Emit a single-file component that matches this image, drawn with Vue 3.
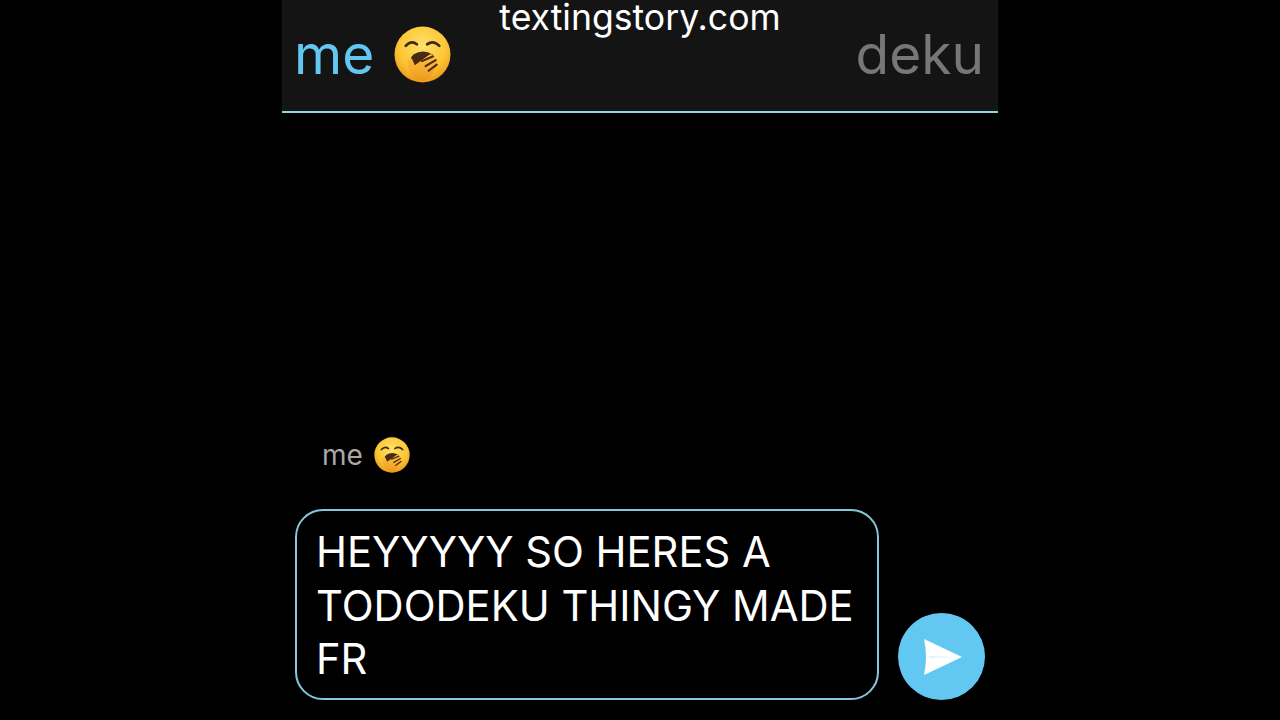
<template>
  <div class="page">
    <main class="phone">
      <header class="top-bar">
        <div class="who">
          <span class="me">me</span>
          <svg class="yawn big" viewBox="0 0 56 56"><use href="#yawn-face" /></svg>
        </div>
        <span class="other">deku</span>
        <span class="watermark">textingstory.com</span>
      </header>

      <section class="composer">
        <div class="sender">
          <span>me</span>
          <svg class="yawn small" viewBox="0 0 56 56">
            <defs>
              <radialGradient id="face-fill" cx="50%" cy="35%" r="65%">
                <stop offset="0" stop-color="#ffe169" />
                <stop offset="0.65" stop-color="#fcc636" />
                <stop offset="1" stop-color="#ec9a1c" />
              </radialGradient>
              <linearGradient id="hand-fill" x1="0" y1="0" x2="0" y2="1">
                <stop offset="0" stop-color="#fdc53c" />
                <stop offset="1" stop-color="#ee981e" />
              </linearGradient>
              <g id="yawn-face">
                <circle cx="28" cy="28" r="27.5" fill="url(#face-fill)" />
                <path d="M11.5 19.5 Q17 13.5 22.5 18" fill="none" stroke="#3f2a14" stroke-width="2.6" stroke-linecap="round" />
                <path d="M32.5 18 Q38.5 13.5 44.5 19.5" fill="none" stroke="#3f2a14" stroke-width="2.6" stroke-linecap="round" />
                <ellipse cx="28.5" cy="34" rx="12.5" ry="9" fill="#4a2a12" />
                <path d="M13 34 Q14.5 30 17.5 32 L20.5 38.5 L35 28 Q38 27 38.5 30 Q41.5 30 41.5 33 Q43.5 34.5 42.5 37 Q43.5 39.5 41.5 41 Q37 49 30 54 Q22 56 18 49 Q13 41 13 34 Z" fill="url(#hand-fill)" />
                <path d="M27.5 34.5 L38 30 M31 39.5 L41 33.5 M34 44 L42 38" fill="none" stroke="#4a2a12" stroke-width="2" stroke-linecap="round" />
              </g>
            </defs>
            <use href="#yawn-face" />
          </svg>
        </div>
        <div class="input-row">
          <div class="bubble">HEYYYYY SO HERES A TODODEKU THINGY MADE FR</div>
          <button class="send" aria-label="send">
            <svg viewBox="0 0 40 40" width="40" height="40">
              <path d="M1 2 Q5 20 1 38 L39 20 Z" fill="#fff" />
              <path d="M6 19.2 L38 20 L6 20.8 Z" fill="#d3effa" />
            </svg>
          </button>
        </div>
      </section>
    </main>
  </div>
</template>

<script setup>
</script>

<style>
html, body {
  background: #000;
}
</style>

<style scoped>
.page {
  display: flex;
  justify-content: center;
  height: 720px;
  overflow: hidden;
  background: #000;
  font-family: Inter, "Liberation Sans", sans-serif;
}

.phone {
  display: flex;
  flex-direction: column;
  justify-content: space-between;
  width: 716px;
}

.top-bar {
  position: relative;
  box-sizing: border-box;
  display: flex;
  align-items: center;
  justify-content: space-between;
  height: 113px;
  padding: 0 14px 2px 12px;
  background: #141414;
  border-bottom: 2px solid #8fd3ec;
}

.who {
  display: flex;
  align-items: center;
  gap: 20px;
}

.me {
  color: #62c8f2;
  font-size: 55px;
  line-height: 1;
}

.other {
  color: #777;
  font-size: 55px;
  line-height: 1;
}

.watermark {
  position: absolute;
  top: 0;
  left: 0;
  right: 0;
  text-align: center;
  color: #fff;
  font-size: 35.6px;
  line-height: 36px;
}

.yawn {
  display: block;
}

.big {
  width: 57px;
  height: 57px;
}

.small {
  width: 36px;
  height: 36px;
}

.composer {
  display: flex;
  flex-direction: column;
  gap: 36px;
  padding: 0 13px 20px;
}

.sender {
  display: flex;
  align-items: center;
  gap: 11px;
  padding-left: 27px;
  color: #a8a8a8;
  font-size: 28px;
  line-height: 34px;
}

.input-row {
  display: flex;
  align-items: flex-end;
  gap: 19px;
}

.bubble {
  box-sizing: border-box;
  width: 584px;
  height: 191px;
  padding: 15px 19px;
  border: 2px solid #88c6dc;
  border-radius: 28px;
  color: #fff;
  font-size: 41.7px;
  line-height: 53.5px;
}

.send {
  display: flex;
  align-items: center;
  justify-content: center;
  width: 87px;
  height: 87px;
  padding: 0 0 0 2px;
  border: 0;
  border-radius: 50%;
  background: #62c8f2;
}
</style>
